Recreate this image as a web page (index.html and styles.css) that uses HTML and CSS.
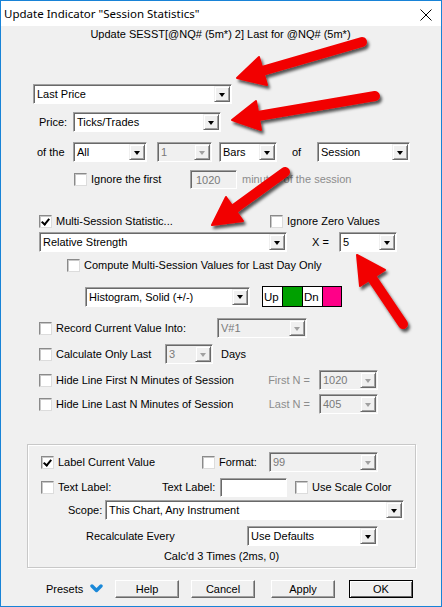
FILE: index.html
```html
<!DOCTYPE html>
<html lang="en">
<head>
    <meta charset="UTF-8">
    <title>Update Indicator "Session Statistics"</title>
    <link rel="stylesheet" href="styles.css">
</head>
<body>

<div class="window">
    <div class="titlebar">
        <span class="title">Update Indicator "Session Statistics"</span>
        <svg class="close" width="12" height="12" viewBox="0 0 12 12">
            <path d="M0.5 0.5 L11.5 11.5 M11.5 0.5 L0.5 11.5" stroke="#000" stroke-width="1" fill="none"/>
        </svg>
    </div>

    <div class="dialog">
        <div class="subtitle">Update SESST[@NQ# (5m*) 2] Last for @NQ# (5m*)</div>

        <div class="row r1">
            <div class="combo" style="width:199px"><span class="val">Last Price</span><span class="drop"></span></div>
        </div>

        <div class="row r2">
            <span class="lbl" style="width:34px">Price:</span>
            <div class="combo" style="width:148px"><span class="val">Ticks/Trades</span><span class="drop"></span></div>
        </div>

        <div class="row r3">
            <span class="lbl" style="width:36px">of the</span>
            <div class="combo" style="width:74px"><span class="val">All</span><span class="drop"></span></div>
            <div class="combo off" style="width:55px;margin-left:10px"><span class="val">1</span><span class="drop"></span></div>
            <div class="combo" style="width:58px;margin-left:7px"><span class="val">Bars</span><span class="drop"></span></div>
            <span class="lbl" style="width:25px;margin-left:15px">of</span>
            <div class="combo" style="width:93px"><span class="val">Session</span><span class="drop"></span></div>
        </div>

        <div class="row r4">
            <label class="check" style="width:116px"><span class="box"></span>Ignore the first</label>
            <div class="field off" style="width:47px">1020</div>
            <span class="grey" style="margin-left:5px">minutes of the session</span>
        </div>

        <div class="row r5">
            <label class="check" style="width:231px"><span class="box on"></span>Multi-Session Statistic...</label>
            <label class="check"><span class="box"></span>Ignore Zero Values</label>
        </div>

        <div class="row r6">
            <div class="combo" style="width:248px"><span class="val">Relative Strength</span><span class="drop"></span></div>
            <span class="lbl" style="width:27px;margin-left:25px">X =</span>
            <div class="combo" style="width:58px"><span class="val">5</span><span class="drop"></span></div>
        </div>

        <div class="row r7">
            <label class="check"><span class="box"></span>Compute Multi-Session Values for Last Day Only</label>
        </div>

        <div class="row r8">
            <div class="combo" style="width:165px"><span class="val">Histogram, Solid (+/-)</span><span class="drop"></span></div>
            <div class="swatches">
                <span class="sw-text">Up</span>
                <span class="sw-up"></span>
                <span class="sw-text">Dn</span>
                <span class="sw-dn"></span>
            </div>
        </div>

        <div class="row r9">
            <label class="check" style="width:178px"><span class="box"></span>Record Current Value Into:</label>
            <div class="combo off" style="width:90px"><span class="val">V#1</span><span class="drop"></span></div>
        </div>

        <div class="row r10">
            <label class="check" style="width:126px"><span class="box"></span>Calculate Only Last</label>
            <div class="combo off" style="width:48px"><span class="val">3</span><span class="drop"></span></div>
            <span class="lbl" style="margin-left:8px">Days</span>
        </div>

        <div class="row r11">
            <label class="check" style="width:220px"><span class="box"></span>Hide Line First N Minutes of Session</label>
            <span class="grey right" style="width:51px">First N =</span>
            <div class="combo off" style="width:59px;margin-left:9px"><span class="val">1020</span><span class="drop"></span></div>
        </div>

        <div class="row r12">
            <label class="check" style="width:220px"><span class="box"></span>Hide Line Last N Minutes of Session</label>
            <span class="grey right" style="width:51px">Last N =</span>
            <div class="combo off" style="width:59px;margin-left:9px"><span class="val">405</span><span class="drop"></span></div>
        </div>

        <div class="group">
            <div class="row ga">
                <label class="check" style="width:161px"><span class="box on"></span>Label Current Value</label>
                <label class="check" style="width:67px"><span class="box"></span>Format:</label>
                <div class="combo off" style="width:109px"><span class="val">99</span><span class="drop"></span></div>
            </div>
            <div class="row gb">
                <label class="check" style="width:121px"><span class="box"></span>Text Label:</label>
                <span class="lbl" style="width:58px">Text Label:</span>
                <div class="field" style="width:67px"></div>
                <label class="check" style="margin-left:8px"><span class="box"></span>Use Scale Color</label>
            </div>
            <div class="row gc">
                <span class="lbl" style="width:37px">Scope:</span>
                <div class="combo" style="width:299px"><span class="val">This Chart, Any Instrument</span><span class="drop"></span></div>
            </div>
            <div class="row gd">
                <span class="lbl" style="width:161px">Recalculate Every</span>
                <div class="combo" style="width:131px"><span class="val">Use Defaults</span><span class="drop"></span></div>
            </div>
            <div class="calcd">Calc'd 3 Times (2ms, 0)</div>
        </div>

        <div class="row buttons">
            <span class="presets">Presets
                <svg width="13" height="10" viewBox="0 0 13 10"><path d="M2 2 L6.5 6.5 L11 2" stroke="#1a88d8" stroke-width="3.4" fill="none" stroke-linejoin="round" stroke-linecap="round"/></svg>
            </span>
            <button class="btn">Help</button>
            <button class="btn" style="margin-left:12px">Cancel</button>
            <button class="btn" style="margin-left:16px">Apply</button>
            <button class="btn default" style="margin-left:14px">OK</button>
        </div>
    </div>

    <!-- annotation arrows drawn over the dialog -->
    <svg class="arrows" width="442" height="607" viewBox="0 0 442 607">
        <defs>
            <filter id="shadow" x="-20%" y="-20%" width="140%" height="140%">
                <feDropShadow dx="2" dy="3" stdDeviation="1.8" flood-color="#000" flood-opacity="0.65"/>
            </filter>
        </defs>
        <g fill="#f20000" stroke="#f20000" filter="url(#shadow)">
            <line x1="362" y1="42" x2="262" y2="71" stroke-width="10" stroke-linecap="round"/>
            <polygon points="237,78 259,57 267,85" stroke-width="2" stroke-linejoin="round"/>

            <line x1="375" y1="96" x2="258" y2="116" stroke-width="10" stroke-linecap="round"/>
            <polygon points="232,120 256,101 261,130" stroke-width="2" stroke-linejoin="round"/>

            <line x1="285" y1="172" x2="234" y2="209" stroke-width="10" stroke-linecap="round"/>
            <polygon points="212,225 226,197 243,221" stroke-width="2" stroke-linejoin="round"/>

            <line x1="403" y1="324" x2="372" y2="278" stroke-width="10" stroke-linecap="round"/>
            <polygon points="357,255 385,270 360,286" stroke-width="2" stroke-linejoin="round"/>
        </g>
    </svg>
</div>

</body>
</html>
```

FILE: styles.css
```css
body {
    margin: 0;
    padding: 0;
    background: #ffffff;
    font-family: 'Liberation Sans', Arial, sans-serif;
    font-size: 11px;
    color: #000;
}

.window {
    position: relative;
    width: 442px;
    height: 607px;
    box-sizing: border-box;
    border: 1px solid #1883d7;
    background-color: #f0f0f0;
    overflow: hidden;
}

.titlebar {
    height: 25px;
    background: #ffffff;
    display: flex;
    align-items: center;
    padding-left: 3px;
}

.title {
    font-family: 'Noto Sans', sans-serif;
    font-size: 11.5px;
    color: #000;
}

.close {
    margin-left: auto;
    margin-right: 9px;
    margin-top: 2px;
}

.dialog {
    display: flex;
    flex-direction: column;
}

.subtitle {
    margin-top: 1px;
    height: 14px;
    line-height: 14px;
    text-align: center;
    padding-right: 1px;
}

.row {
    display: flex;
    align-items: center;
    height: 20px;
    flex-shrink: 0;
}

.r1 { margin-top: 43px; padding-left: 32px; }
.r2 { margin-top: 8px; padding-left: 38px; }
.r3 { margin-top: 10px; padding-left: 36px; }
.r4 { margin-top: 7px; padding-left: 73px; }
.r5 { margin-top: 26px; padding-left: 38px; height: 13px; }
.r6 { margin-top: 4px; padding-left: 38px; }
.r7 { margin-top: 7px; padding-left: 66px; height: 13px; }
.r8 { margin-top: 14px; padding-left: 84px; height: 21px; }
.r9 { margin-top: 11px; padding-left: 38px; }
.r10 { margin-top: 6px; padding-left: 38px; }
.r11 { margin-top: 6px; padding-left: 38px; }
.r12 { margin-top: 4px; padding-left: 38px; }

.lbl {
    flex-shrink: 0;
    white-space: nowrap;
}

.grey {
    color: #8c8c8c;
    white-space: nowrap;
    flex-shrink: 0;
}

.right {
    text-align: right;
}

/* combo boxes */
.combo {
    display: flex;
    height: 20px;
    box-sizing: border-box;
    border: 1px solid;
    border-color: #a0a0a0 #ffffff #ffffff #a0a0a0;
    box-shadow: inset 1px 1px #696969;
    background: #ffffff;
    flex-shrink: 0;
}

.combo .val {
    flex: 1;
    padding-left: 3px;
    padding-top: 1px;
    line-height: 17px;
    white-space: nowrap;
    overflow: hidden;
}

.combo .drop {
    width: 16px;
    height: 16px;
    margin: 1px 1px 1px 0;
    box-sizing: border-box;
    background: #f0f0f0;
    border: 1px solid;
    border-color: #f0f0f0 #696969 #696969 #f0f0f0;
    box-shadow: inset 1px 1px #ffffff, inset -1px -1px #a0a0a0;
    display: flex;
    align-items: center;
    justify-content: center;
}

.combo .drop::after {
    content: "";
    width: 0;
    height: 0;
    border-left: 3.5px solid transparent;
    border-right: 3.5px solid transparent;
    border-top: 4px solid #000;
    margin-top: 1px;
}

.combo.off {
    background: #f0f0f0;
    color: #7a7a7a;
}

.combo.off .drop::after {
    border-top-color: #a0a0a0;
}

/* text fields */
.field {
    height: 19px;
    box-sizing: border-box;
    border: 1px solid;
    border-color: #a0a0a0 #ffffff #ffffff #a0a0a0;
    box-shadow: inset 1px 1px #696969;
    background: #ffffff;
    padding-left: 5px;
    line-height: 18px;
    flex-shrink: 0;
}

.field.off {
    background: #f0f0f0;
    color: #7a7a7a;
}

/* checkboxes */
.check {
    display: flex;
    align-items: center;
    white-space: nowrap;
    flex-shrink: 0;
    line-height: 13px;
}

.box {
    width: 13px;
    height: 13px;
    box-sizing: border-box;
    border: 1px solid;
    border-color: #8a8a8a #dcdcdc #dcdcdc #8a8a8a;
    box-shadow: inset 1px 1px #c8c8c8;
    background: #ffffff;
    margin-right: 4px;
    flex-shrink: 0;
    position: relative;
}

.box.on::after {
    content: "";
    position: absolute;
    left: 3px;
    top: 1px;
    width: 3px;
    height: 6px;
    border-right: 2px solid #000;
    border-bottom: 2px solid #000;
    transform: rotate(40deg);
}

/* colour swatches */
.swatches {
    display: flex;
    margin-left: 12px;
    height: 21px;
    box-sizing: border-box;
    border: 1px solid #000;
    background: #ffffff;
}

.swatches span {
    height: 100%;
    box-sizing: border-box;
}

.sw-text {
    width: 20px;
    padding-left: 1px;
    line-height: 21px;
    font-size: 11.5px;
    border-right: 1px solid #000;
}

.sw-up {
    width: 20px;
    background: #00a000;
    border-right: 1px solid #000;
}

.sw-dn {
    width: 18px;
    background: #ff0088;
}

/* bottom group box */
.group {
    margin-top: 30px;
    margin-left: 26px;
    width: 389px;
    height: 124px;
    box-sizing: border-box;
    border: 1px solid #c8c8c8;
    box-shadow: inset 1px 1px #ffffff, 1px 1px #ffffff;
    display: flex;
    flex-direction: column;
}

.ga { margin-top: 7px; padding-left: 13px; }
.gb { margin-top: 5px; padding-left: 13px; }
.gc { margin-top: 3px; padding-left: 40px; }
.gd { margin-top: 6px; padding-left: 58px; }

.calcd {
    margin-top: 3px;
    height: 14px;
    line-height: 14px;
    text-align: center;
}

/* dialog buttons */
.buttons {
    margin-top: 12px;
    padding-left: 45px;
    height: 18px;
}

.presets {
    width: 69px;
    display: flex;
    align-items: center;
    gap: 7px;
    flex-shrink: 0;
}

.btn {
    width: 64px;
    height: 18px;
    padding: 0;
    box-sizing: border-box;
    font-family: 'Liberation Sans', Arial, sans-serif;
    font-size: 11px;
    color: #000;
    background: #f0f0f0;
    border: 1px solid;
    border-color: #ffffff #696969 #696969 #ffffff;
    box-shadow: inset -1px -1px #a0a0a0;
    flex-shrink: 0;
}

.btn.default {
    border: 1px solid #000;
    box-shadow: inset 1px 1px #ffffff, inset -1px -1px #696969;
}

.arrows {
    position: absolute;
    left: -1px;
    top: -1px;
    pointer-events: none;
}
```
